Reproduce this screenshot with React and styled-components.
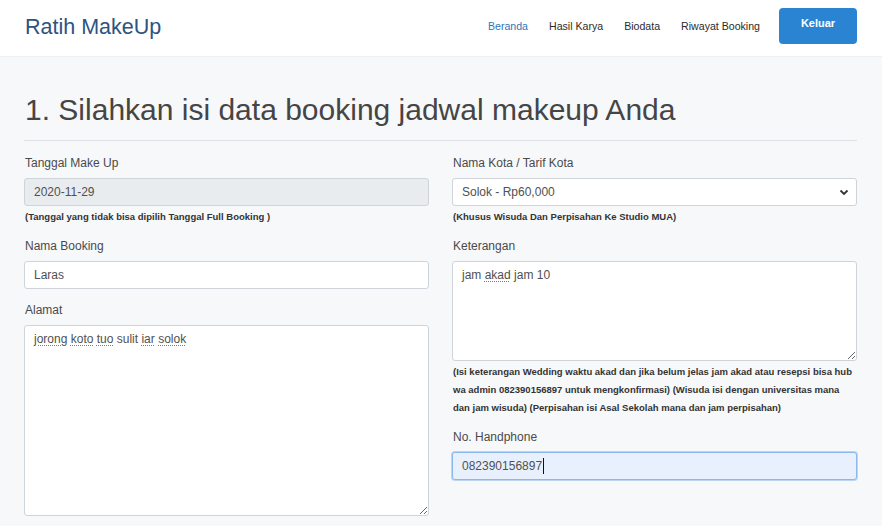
import styled, { createGlobalStyle } from "styled-components";

const GlobalStyle = createGlobalStyle`
  html, body {
    margin: 0;
    padding: 0;
    background: #f7f8fa;
    font-family: "Liberation Sans", Arial, sans-serif;
    color: #333;
  }
  * { box-sizing: border-box; }
`;

const Navbar = styled.nav`
  display: flex;
  align-items: center;
  height: 57px;
  padding: 0 25px 0 25px;
  background: #fff;
  border-bottom: 1px solid #eef0f2;
`;

const Brand = styled.a`
  font-size: 21.5px;
  color: #2d5382;
  margin-top: -2px;
`;

const NavList = styled.ul`
  display: flex;
  align-items: center;
  list-style: none;
  margin: 0 0 0 auto;
  padding: 0;
  gap: 21px;
`;

const NavLink = styled.li`
  font-size: 10.6px;
  color: ${(p) => (p.$active ? "#2f75b8" : "#2b2b2b")};
  margin-top: -4px;
`;

const LogoutButton = styled.button`
  width: 78px;
  height: 36px;
  margin-left: 19px;
  margin-top: -4px;
  padding: 0 0 7px;
  border: none;
  border-radius: 4px;
  background: #2b84d1;
  color: #fff;
  font-family: inherit;
  font-size: 11px;
  font-weight: bold;
`;

const Main = styled.main`
  padding: 0 25px 0 24px;
`;

const Title = styled.h1`
  margin: 0;
  padding: 35px 0 12px 1px;
  font-size: 30px;
  font-weight: normal;
  line-height: 36px;
  color: #454545;
  border-bottom: 1px solid #dfe2e5;
`;

const FormGrid = styled.div`
  display: grid;
  grid-template-columns: 1fr 1fr;
  column-gap: 23px;
  padding-top: 13px;
`;

const Column = styled.div`
  display: flex;
  flex-direction: column;
`;

const Group = styled.div`
  display: flex;
  flex-direction: column;
  margin-bottom: ${(p) => p.$gap || 11}px;
`;

const Label = styled.label`
  font-size: 12px;
  line-height: 18px;
  color: #4a4a4a;
  margin-bottom: 6px;
  padding-left: 1px;
`;

const Help = styled.small`
  display: block;
  margin-top: 2px;
  font-size: 9.5px;
  font-weight: bold;
  line-height: 18px;
  color: #333;
  padding-left: 1px;
`;

const Field = styled.div`
  display: flex;
  align-items: ${(p) => (p.$multi ? "flex-start" : "center")};
  height: ${(p) => p.$h || 28}px;
  padding: ${(p) => (p.$multi ? "6px 9px" : "0 9px")};
  font-size: 12px;
  color: #505050;
  background: ${(p) => (p.$disabled ? "#e9ecef" : p.$focus ? "#e8f0fe" : "#fff")};
  border: 1px solid ${(p) => (p.$focus ? "#8ab8ea" : "#ced4da")};
  border-radius: 3px;
  box-shadow: ${(p) => (p.$focus ? "0 0 0 1px rgba(80,150,230,.35)" : "none")};
  resize: ${(p) => (p.$multi ? "both" : "none")};
  overflow: hidden;
`;

const SelectIcon = styled.svg`
  margin-left: auto;
  margin-right: -2px;
`;

const Typo = styled.span`
  text-decoration: underline dotted #e05050;
  text-decoration-thickness: 1px;
  text-underline-offset: 2px;
`;

const Caret = styled.span`
  display: inline-block;
  width: 1px;
  height: 16px;
  background: #111;
  margin-left: 1px;
`;

export default function App() {
  return (
    <>
      <GlobalStyle />
      <Navbar>
        <Brand>Ratih MakeUp</Brand>
        <NavList>
          <NavLink $active>Beranda</NavLink>
          <NavLink>Hasil Karya</NavLink>
          <NavLink>Biodata</NavLink>
          <NavLink>Riwayat Booking</NavLink>
        </NavList>
        <LogoutButton>Keluar</LogoutButton>
      </Navbar>
      <Main>
        <Title>1. Silahkan isi data booking jadwal makeup Anda</Title>
        <FormGrid>
          <Column>
            <Group>
              <Label>Tanggal Make Up</Label>
              <Field $disabled>2020-11-29</Field>
              <Help>(Tanggal yang tidak bisa dipilih Tanggal Full Booking )</Help>
            </Group>
            <Group $gap={12}>
              <Label>Nama Booking</Label>
              <Field>Laras</Field>
            </Group>
            <Group>
              <Label>Alamat</Label>
              <Field $multi $h={191}>
                <span>
                  <Typo>jorong</Typo> <Typo>koto</Typo> <Typo>tuo</Typo> sulit{" "}
                  <Typo>iar</Typo> <Typo>solok</Typo>
                </span>
              </Field>
            </Group>
          </Column>
          <Column>
            <Group>
              <Label>Nama Kota / Tarif Kota</Label>
              <Field>
                Solok - Rp60,000
                <SelectIcon width="10" height="8" viewBox="0 0 10 8">
                  <path d="M1.5 2.5 L5 6 L8.5 2.5" fill="none" stroke="#333" strokeWidth="1.8" />
                </SelectIcon>
              </Field>
              <Help>(Khusus Wisuda Dan Perpisahan Ke Studio MUA)</Help>
            </Group>
            <Group>
              <Label>Keterangan</Label>
              <Field $multi $h={100}>
                <span>
                  jam <Typo>akad</Typo> jam 10
                </span>
              </Field>
              <Help>
                (Isi keterangan Wedding waktu akad dan jika belum jelas jam akad atau resepsi bisa hub wa
                admin 082390156897 untuk mengkonfirmasi) (Wisuda isi dengan universitas mana dan jam
                wisuda) (Perpisahan isi Asal Sekolah mana dan jam perpisahan)
              </Help>
            </Group>
            <Group>
              <Label>No. Handphone</Label>
              <Field $focus>
                082390156897
                <Caret />
              </Field>
            </Group>
          </Column>
        </FormGrid>
      </Main>
    </>
  );
}
